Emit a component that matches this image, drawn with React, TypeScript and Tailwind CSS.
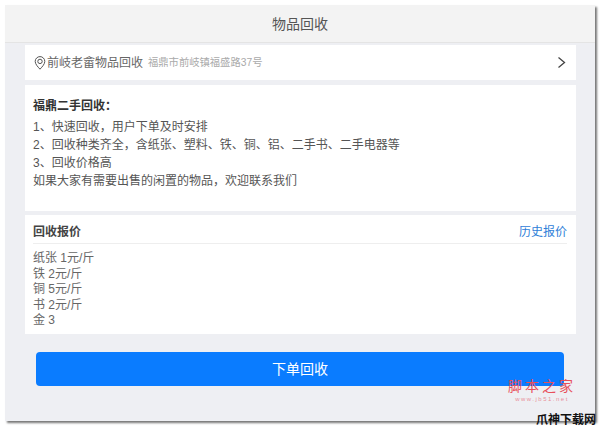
export default function App() {
  return (
    <div className="w-[600px] h-[427px] bg-white overflow-hidden pt-[5px] pl-[5px] font-['Liberation_Sans','Noto_Sans_CJK_SC',sans-serif] relative">
      <div className="w-[590px] h-[416px] bg-[#eeeff3] flex flex-col shadow-[2px_2px_2px_#777]">
        <div className="h-[38px] shrink-0 bg-[#f3f3f3] border-b border-[#e4e4e4] flex items-center justify-center text-[14px] text-[#555] pt-[1px]">物品回收</div>
        <div className="ml-[20px] mr-[19px] mt-[2px] h-[35px] bg-white flex items-center pl-[9px] pr-[10px] shrink-0">
          <svg width="12" height="14" viewBox="0 0 12 14" fill="none" stroke="#555" strokeWidth="1">
            <path d="M6 13.2C3.6 10.6 1.2 8 1.2 5.4a4.8 4.8 0 0 1 9.6 0C10.800 8 8.400 10.600 6 13.200Z" />
            <circle cx="6" cy="5.400" r="2.200" />
          </svg>
          <span className="text-[12px] text-[#666] ml-[1px]">前岐老畲物品回收</span>
          <span className="text-[10.300px] text-[#aaa] ml-[5px]">福鼎市前岐镇福盛路37号</span>
          <svg className="ml-auto" width="9" height="13" viewBox="0 0 9 13" fill="none" stroke="#444" strokeWidth="1.300">
            <path d="M1.500 1.500L7.500 6.500L1.500 11.500" />
          </svg>
        </div>
        <div className="ml-[20px] mr-[19px] mt-[5px] h-[126px] bg-white px-[8px] pt-[12px] text-[12px] leading-[18px] text-[#555] shrink-0">
          <div className="font-bold text-[#333] mb-[3px]">福鼎二手回收：</div>
          <div>1、快速回收，用户下单及时安排</div>
          <div>2、回收种类齐全，含纸张、塑料、铁、铜、铝、二手书、二手电器等</div>
          <div>3、回收价格高</div>
          <div>如果大家有需要出售的闲置的物品，欢迎联系我们</div>
        </div>
        <div className="ml-[20px] mr-[19px] mt-[4px] h-[119px] bg-white pl-[8px] shrink-0">
          <div className="h-[29px] pt-[6px] flex items-center justify-between border-b border-[#eeeeee] mr-[9px]">
            <span className="text-[12px] font-bold text-[#444]">回收报价</span>
            <span className="text-[12px] text-[#2f80d8]">历史报价</span>
          </div>
          <div className="pt-[7px] text-[12px] leading-[15.500px] text-[#666]">
            <div>纸张 1元/斤</div>
            <div>铁 2元/斤</div>
            <div>铜 5元/斤</div>
            <div>书 2元/斤</div>
            <div>金 3</div>
          </div>
        </div>
        <button className="ml-[31px] mr-[31px] mt-[18px] h-[34px] shrink-0 rounded-[4px] bg-[#0a7cff] text-white text-[14px] flex items-center justify-center">下单回收</button>
      </div>
      <div className="absolute left-[507px] top-[380px] w-[70px] text-center leading-none">
        <div className="text-[14px] text-[#e8505b] tracking-[3px] font-['Liberation_Serif','Noto_Sans_CJK_SC',serif]">脚本之家</div>
        <div className="text-[6px] text-[#e8909a] tracking-[1.500px] mt-[2px]">www.jb51.net</div>
      </div>
      <div className="absolute left-[536px] top-[413px] text-[12px] font-bold text-[#111] leading-[14px]">爪神下载网</div>
    </div>
  );
}
